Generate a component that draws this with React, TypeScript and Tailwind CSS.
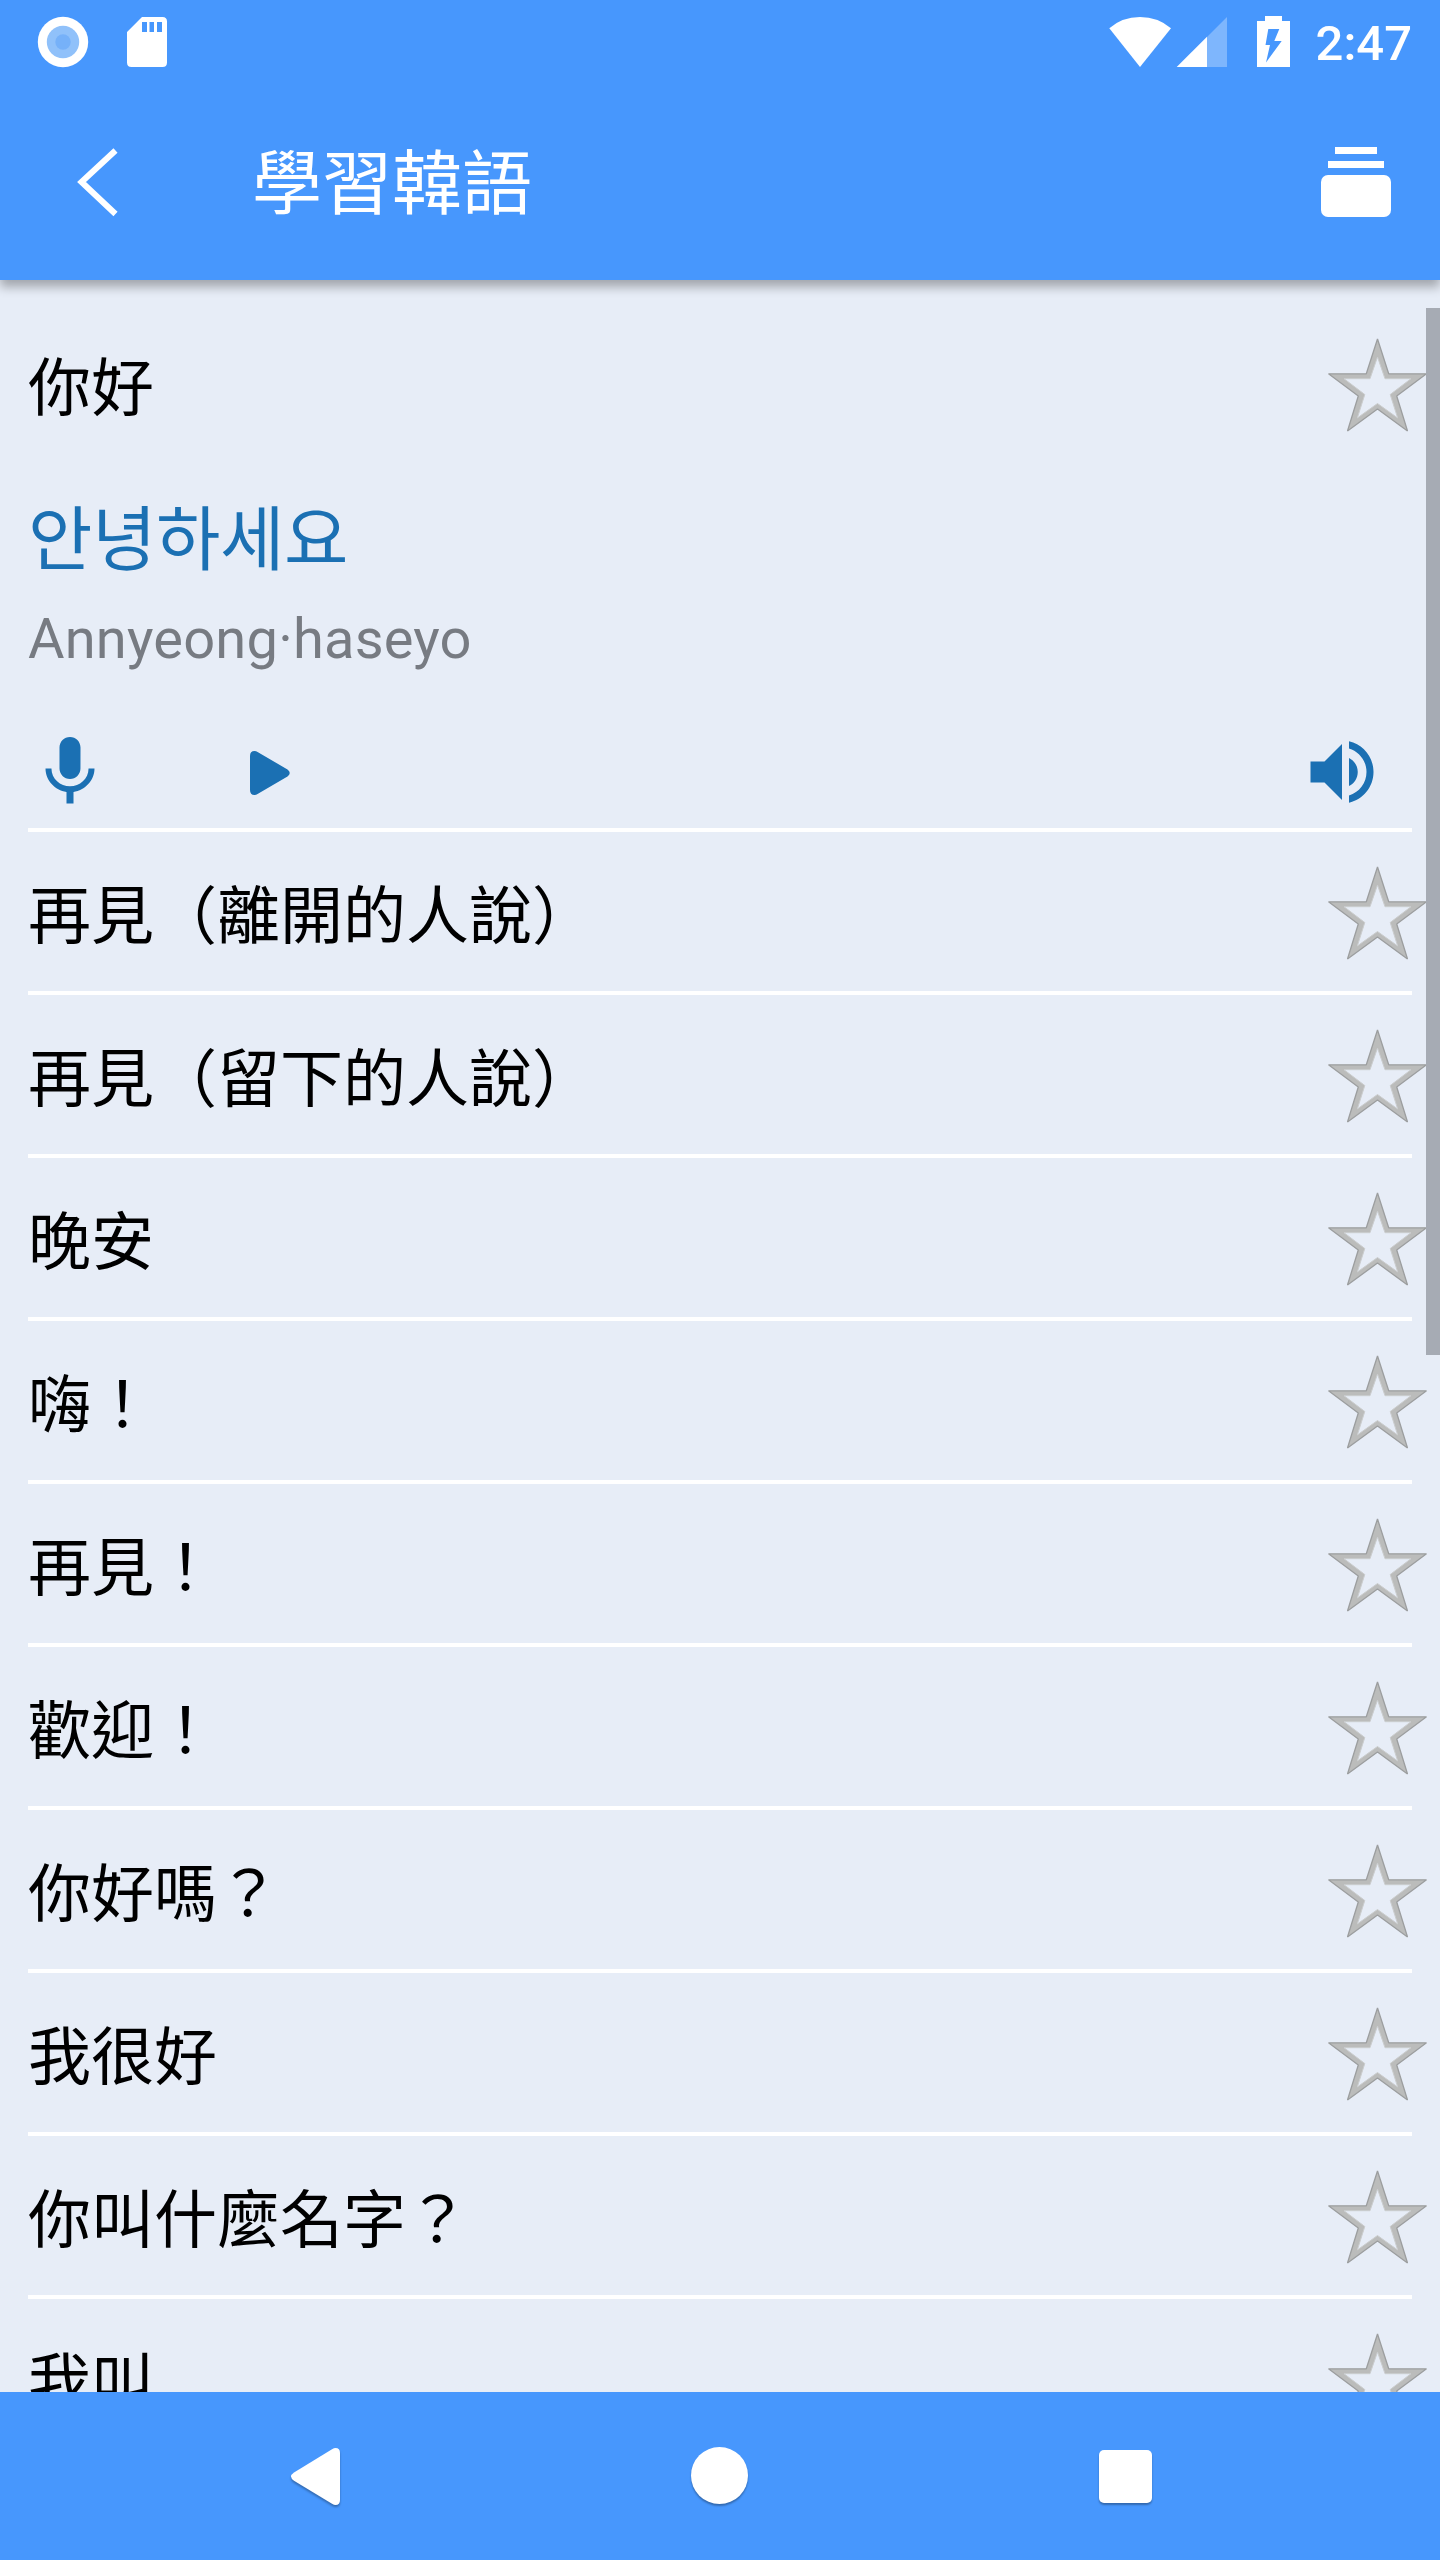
import React from "react";

const phrases = [
  "再見（離開的人說）",
  "再見（留下的人說）",
  "晚安",
  "嗨！",
  "再見！",
  "歡迎！",
  "你好嗎？",
  "我很好",
  "你叫什麼名字？",
  "我叫",
];

function Star() {
  return (
    <svg className="mt-[33px] mr-[12px] h-[96px] w-[101px] shrink-0" viewBox="1327 337 101 96">
      <path
        fill="#bbbcbb"
        fillRule="evenodd"
        d="M1377.5 339L1388.7 373.8H1426.5L1396.7 396L1407.5 431L1377.5 409L1347.5 431L1358.3 396L1328.5 373.8H1366.3ZM1377.5 357L1370 378.7H1344L1364.8 394.5L1357.3 418L1377.5 403.5L1397.7 418L1390.2 394.5L1411 378.7H1385Z"
      />
      <path
        fill="none"
        stroke="#9c9e9f"
        strokeWidth="1.3"
        strokeLinejoin="bevel"
        d="M1377.5 339L1388.7 373.8H1426.5L1396.7 396L1407.5 431L1377.5 409L1347.5 431L1358.3 396L1328.5 373.8H1366.3Z"
      />
      <path
        fill="none"
        stroke="#cbcdce"
        strokeWidth="1"
        d="M1377.5 357L1370 378.7H1344L1364.8 394.5L1357.3 418L1377.5 403.5L1397.7 418L1390.2 394.5L1411 378.7H1385Z"
      />
    </svg>
  );
}

function PhraseHeading({ text }: { text: string }) {
  return (
    <div className="flex h-[159px] items-start justify-between">
      <span className="pt-[39px] pl-[28px] text-[63px] leading-[92px] whitespace-nowrap text-black">{text}</span>
      <Star />
    </div>
  );
}

function Divider() {
  return <div className="mx-[28px] h-1 bg-white" />;
}

function StatusBar() {
  return (
    <div className="flex h-[84px] items-start">
      <svg className="mt-[16px] ml-[37px] h-[52px] w-[52px]" viewBox="0 0 52 52">
        <circle cx="26" cy="26" r="25.2" fill="#fff" />
        <circle cx="26" cy="26" r="16.2" fill="#90c1fa" />
        <circle cx="26" cy="26" r="7.7" fill="#76b1f9" />
      </svg>
      <svg className="mt-[17px] ml-[38px] h-[50px] w-[40px]" viewBox="0 0 40 50">
        <path
          fill="#fff"
          fillRule="evenodd"
          d="M15 0H35.5Q40 0 40 4.5V45.5Q40 50 35.5 50H4.5Q0 50 0 45.5V15ZM15 5V15H20V5ZM22.5 5V15H27V5ZM30 5V15H35V5Z"
        />
      </svg>
      <svg className="mt-[16px] ml-auto h-[52px] w-[182px]" viewBox="1109 16 182 52">
        <path fill="#fff" d="M1109.3 28.3Q1122 17 1140 17T1171 28.3L1140 67Z" />
        <path fill="#fff" fillOpacity=".3" d="M1207 37L1227 17V67H1207Z" />
        <path fill="#fff" d="M1176.7 67L1207 36.7V67Z" />
        <path
          fill="#fff"
          fillRule="evenodd"
          d="M1265 16H1282V21H1290V67H1257V21H1265ZM1268.3 29L1265.5 45H1270L1266 62.5L1281.7 41H1274.3L1279.3 29Z"
        />
      </svg>
      <span className="mt-[15px] mr-[28px] ml-[25px] font-[Roboto] text-[49px] leading-[58px] font-medium">2:47</span>
    </div>
  );
}

export default function App() {
  return (
    <div
      lang="zh-Hant"
      className="flex h-[2560px] w-[1440px] flex-col overflow-hidden bg-[#e7edf7] font-[Roboto,'Noto_Sans_CJK_TC',sans-serif]"
    >
      <header className="relative z-10 h-[280px] shrink-0 bg-[#4797fd] text-white shadow-[0_7px_10px_rgba(0,0,0,0.3)]">
        <StatusBar />
        <div className="flex h-[196px] items-center">
          <svg className="ml-[76px] h-[70px] w-[44px]" viewBox="76 146 44 70">
            <path fill="none" stroke="#fff" strokeWidth="6" d="M115.5 149.5L81.5 181L115.5 213" />
          </svg>
          <h1 className="mt-[5px] ml-[132px] text-[70px] leading-[102px] font-normal">學習韓語</h1>
          <svg className="mr-[49px] ml-auto h-[70px] w-[70px]" viewBox="0 0 70 70" fill="#fff">
            <rect x="14" y="0" width="42" height="7" />
            <rect x="7" y="14" width="56" height="7" />
            <rect x="0" y="28" width="70" height="42" rx="7" />
          </svg>
        </div>
      </header>

      <main className="relative min-h-0 flex-1 overflow-hidden pt-[24px]">
        <section>
          <PhraseHeading text="你好" />
          <div className="flex h-[267px] flex-col pl-[28px]">
            <span
              lang="ko"
              className="mt-[21px] font-['Noto_Sans_CJK_KR',sans-serif] text-[70px] leading-[102px] tracking-[-0.4px] text-[#1b70b3]"
            >
              안녕하세요
            </span>
            <span className="mt-[20px] text-[56px] leading-[66px] tracking-[0.2px] text-[#777b82]">
              Annyeong·haseyo
            </span>
          </div>
          <div className="flex h-[98px] items-start px-[28px] text-[#1b70b3]">
            <svg className="h-[84px] w-[84px]" viewBox="0 0 24 24" fill="currentColor">
              <path d="M12 14c1.66 0 2.99-1.34 2.99-3L15 5c0-1.66-1.34-3-3-3S9 3.34 9 5v6c0 1.66 1.34 3 3 3zm5.3-3c0 3-2.54 5.1-5.3 5.1S6.7 14 6.7 11H5c0 3.41 2.72 6.23 6 6.72V21h2v-3.28c3.28-.48 6-3.3 6-6.72h-1.7z" />
            </svg>
            <svg className="mt-[20px] ml-[137px] h-[46px] w-[42px]" viewBox="249 750 42 46" fill="currentColor">
              <path d="M250 756Q250 751 254.500 751Q256 751 258 752.200L287.500 769.500Q292 773 287.500 776.500L258 793.800Q256 795 254.500 795Q250 795 250 790Z" />
            </svg>
            <svg className="mr-[28px] ml-auto h-[84px] w-[84px]" viewBox="0 0 24 24" fill="currentColor">
              <path d="M3 9v6h4l5 5V4L7 9H3zm13.500 3c0-1.770-1.020-3.290-2.500-4.030v8.050c1.480-.730 2.500-2.250 2.500-4.020zM14 3.230v2.060c2.890.860 5 3.540 5 6.710s-2.110 5.850-5 6.710v2.060c4.010-.910 7-4.490 7-8.770s-2.990-7.860-7-8.770z" />
            </svg>
          </div>
          <Divider />
        </section>
        {phrases.map((text) => (
          <section key={text}>
            <PhraseHeading text={text} />
            <Divider />
          </section>
        ))}
        <div className="absolute top-[28px] right-0 h-[1047px] w-[14px] bg-[#a6abb4]" />
      </main>

      <nav className="flex h-[168px] shrink-0 items-center bg-[#4797fd]">
        <svg className="ml-[287px] h-[66px] w-[60px] drop-shadow-[0_2px_1px_rgba(0,0,0,0.3)]" viewBox="287 2443 60 66">
          <path
            fill="#fff"
            d="M340 2453V2500Q340 2505 335.500 2505Q334 2505 332 2503.800L294 2480.800Q288 2476.500 294 2472.500L332 2449.200Q334 2448 335.500 2448Q340 2448 340 2453Z"
          />
        </svg>
        <div className="mt-[-2px] ml-[344px] size-[57px] rounded-full bg-white shadow-[0_2px_2px_rgba(0,0,0,0.3)]" />
        <div className="ml-[351px] size-[53px] rounded-[5px] bg-white shadow-[0_2px_2px_rgba(0,0,0,0.3)]" />
      </nav>
    </div>
  );
}
